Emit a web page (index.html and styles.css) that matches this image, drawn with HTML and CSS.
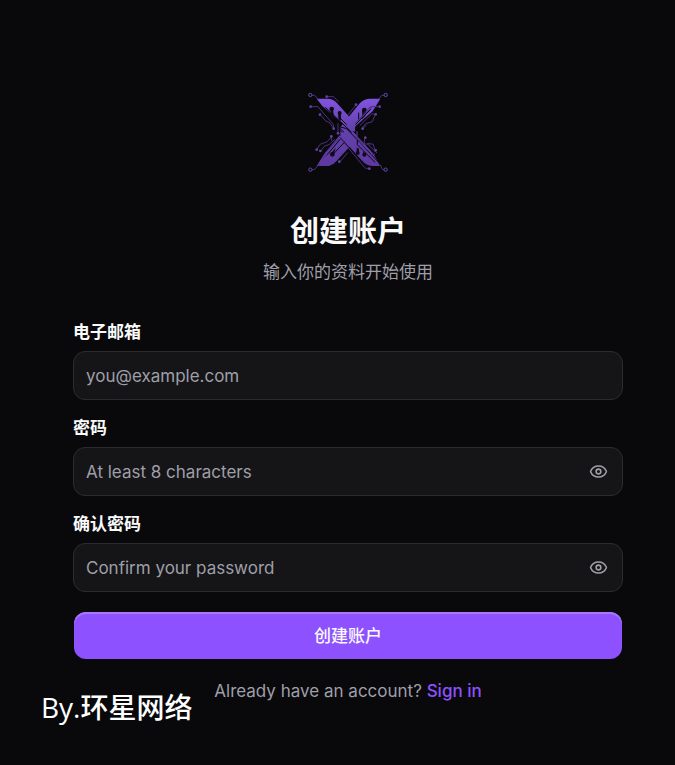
FILE: index.html
```html
<!DOCTYPE html>
<html lang="zh-CN">
<head>
<meta charset="utf-8">
<meta name="viewport" content="width=device-width, initial-scale=1">
<title>创建账户</title>
<link rel="stylesheet" href="styles.css">
</head>
<body>
<main class="page">
  <header class="intro">
    <svg class="logo" viewBox="0 0 288 288" aria-hidden="true">
      <defs>
        <linearGradient id="violet" gradientUnits="userSpaceOnUse" x1="0" y1="40" x2="0" y2="248">
          <stop offset="0" stop-color="#8355e2"/>
          <stop offset="0.45" stop-color="#6341ae"/>
          <stop offset="1" stop-color="#5d389f"/>
        </linearGradient>
      </defs>
      <g fill="url(#violet)">
        <path d="M241 44H208Q190 45 178 59L119 132 142 158 168 125 218 82Z"/>
        <path d="M50 44H87Q100 45 110 56L160 112Q167 121 165 143L150 138 67 66Z"/>
        <path d="M50 246H87Q99 244 109 232L150 187 119 154 72 211Z"/>
        <path d="M121 132V158L187 231Q199 245 216 246H240L221 210 146 128Z"/>
      </g>
      <g class="cut">
        <path d="M118 128L140 134 235 234M120 160L150 194"/>
        <path d="M76 70L155 145M104 103V117L132 145M65 82L125 145M118 82V100L140 122"/>
        <path d="M166 122L212 76M176 86V107M188 78V104"/>
        <path d="M80 214L122 164M100 210L135 173M76 196L107 166"/>
        <path d="M172 168V182L225 235M175 193V208"/>
      </g>
      <g class="hole">
        <circle cx="95" cy="75" r="7"/><path d="M92 78h7l5 32-12-10z"/>
        <circle cx="119" cy="87" r="6"/><path d="M115 88h8v23l-8-7z"/>
        <circle cx="193" cy="78" r="7"/><path d="M190 79h8v13l-11 13z"/>
        <circle cx="97" cy="211" r="7"/><path d="M94 207l13-16-6 20z"/>
        <circle cx="173" cy="207" r="6"/><path d="M170 190l7 7v11h-7z"/>
        <circle cx="193" cy="212" r="6"/><path d="M189 202l7 8-7 3z"/>
      </g>
      <g class="trace">
        <path d="M36 34H44L55 46M84 38H101L116 54M36 68H54L70 87 100 121V132M64 95L77 111 89 116 99 131M114 145V117M252 34H245L235 46M144 93L166 65M217 69H210L167 117M222 90H215L179 125M187 131L197 119 217 113 225 93M171 167V142M235 68H216L176 110"/>
        <path d="M36 257H43L58 240M51 195L60 181 82 173 95 158M62 201L73 187 88 181 105 166M75 207L116 165M95 158V171M121 232L143 206M121 163L190 246 197 253H208M171 142V158L188 180 219 180 225 197M194 164L192 181M177 174L211 211H225M231 207L202 180 211 177M240 242L248 257H253M190 132L200 122M69 223L84 208"/>
      </g>
      <g class="node">
        <circle cx="31" cy="33" r="5"/><circle cx="257" cy="33" r="5"/>
        <circle cx="31" cy="257" r="5"/><circle cx="257" cy="257" r="5"/>
      </g>
      <g class="dot">
        <circle cx="80" cy="38" r="4"/><circle cx="32" cy="68" r="4"/><circle cx="60" cy="92" r="4"/>
        <circle cx="101" cy="134" r="4"/><circle cx="114" cy="148" r="4"/><circle cx="168" cy="62" r="4"/>
        <circle cx="239" cy="68" r="4"/><circle cx="227" cy="91" r="4"/><circle cx="188" cy="134" r="4"/>
        <circle cx="94" cy="157" r="4"/><circle cx="50" cy="197" r="4"/><circle cx="61" cy="201" r="4"/>
        <circle cx="118" cy="233" r="4"/><circle cx="196" cy="161" r="4"/><circle cx="227" cy="199" r="4"/>
        <circle cx="208" cy="254" r="4"/>
      </g>
    </svg>
    <h1 class="title">创建账户</h1>
    <p class="subtitle">输入你的资料开始使用</p>
  </header>

  <form class="form">
    <div class="field">
      <label class="label" for="email">电子邮箱</label>
      <div class="control">
        <input class="input" id="email" type="email" placeholder="you@example.com">
      </div>
    </div>
    <div class="field">
      <label class="label" for="password">密码</label>
      <div class="control">
        <input class="input" id="password" type="password" placeholder="At least 8 characters">
        <button class="reveal" type="button" aria-label="显示密码">
          <svg class="eye" viewBox="0 0 24 24" aria-hidden="true"><path d="M2.06 12.35a1 1 0 0 1 0-.7 10.75 10.75 0 0 1 19.88 0 1 1 0 0 1 0 .7 10.75 10.75 0 0 1-19.88 0"/><circle cx="12" cy="12" r="3"/></svg>
        </button>
      </div>
    </div>
    <div class="field">
      <label class="label" for="confirm">确认密码</label>
      <div class="control">
        <input class="input" id="confirm" type="password" placeholder="Confirm your password">
        <button class="reveal" type="button" aria-label="显示确认密码">
          <svg class="eye" viewBox="0 0 24 24" aria-hidden="true"><path d="M2.06 12.35a1 1 0 0 1 0-.7 10.75 10.75 0 0 1 19.88 0 1 1 0 0 1 0 .7 10.75 10.75 0 0 1-19.88 0"/><circle cx="12" cy="12" r="3"/></svg>
        </button>
      </div>
    </div>
    <button class="submit" type="submit">创建账户</button>
  </form>

  <p class="switch">Already have an account? <a class="link" href="#">Sign in</a></p>
</main>
<div class="watermark">By.环星网络</div>
</body>
</html>
```

FILE: styles.css
```css
*,
*::before,
*::after {
  box-sizing: border-box;
}

body {
  position: relative;
  min-height: 100vh;
  margin: 0;
  background: #09090b;
  color: #fafafa;
  font-family: Inter, "Noto Sans CJK SC", sans-serif;
  font-size: 17px;
  line-height: 24px;
}

.page {
  padding: 84px 52px 48px 73px;
}

.intro {
  display: flex;
  flex-direction: column;
  align-items: center;
  text-align: center;
}

.logo {
  width: 96px;
  height: 96px;
}

.title {
  margin: 32px 0 8px;
  font-size: 29px;
  font-weight: 700;
  line-height: 40px;
}

.subtitle {
  margin: 0;
  color: #9f9fa9;
}

.form {
  display: flex;
  flex-direction: column;
  gap: 16px;
  margin-top: 36px;
}

.field {
  display: flex;
  flex-direction: column;
  gap: 7px;
}

.label {
  font-weight: 600;
}

.control {
  display: flex;
  align-items: center;
  height: 49px;
  padding-right: 14px;
  border: 1px solid #2c2c2f;
  border-radius: 12px;
  background: #151517;
}

.input {
  flex: 1;
  min-width: 0;
  height: 100%;
  padding: 0 12px;
  border: 0;
  outline: 0;
  background: transparent;
  color: inherit;
  font: inherit;
}

.input::placeholder {
  color: #9f9fa9;
  opacity: 1;
}

.reveal {
  display: flex;
  padding: 0;
  border: 0;
  background: transparent;
  color: #9f9fa9;
  cursor: pointer;
}

.eye {
  width: 19px;
  height: 19px;
  fill: none;
  stroke: currentColor;
  stroke-width: 2;
  stroke-linecap: round;
  stroke-linejoin: round;
}

.submit {
  height: 47px;
  margin: 4px 1px 0;
  padding: 0;
  border: 0;
  border-radius: 12px;
  background: #8e51ff;
  box-shadow: inset 0 2px 1px #a978ff;
  color: #fafafa;
  font: inherit;
  font-weight: 500;
  cursor: pointer;
}

.switch {
  margin: 20px 0 0;
  color: #9f9fa9;
  text-align: center;
}

.link {
  color: #8e51ff;
  font-weight: 500;
  text-decoration: none;
}

.watermark {
  position: absolute;
  bottom: 38px;
  left: 41px;
  color: #fff;
  font-family: "Open Sans", "Noto Sans CJK SC", sans-serif;
  font-size: 28px;
  font-weight: 500;
  line-height: 40px;
}

.cut {
  fill: none;
  stroke: #09090b;
  stroke-width: 3;
}

.hole {
  fill: #0d0b14;
}

.trace {
  fill: none;
  stroke: #4b317e;
  stroke-width: 3;
}

.node {
  fill: #09090b;
  stroke: #6d49b4;
  stroke-width: 3;
}

.dot {
  fill: #6542a5;
}
```
